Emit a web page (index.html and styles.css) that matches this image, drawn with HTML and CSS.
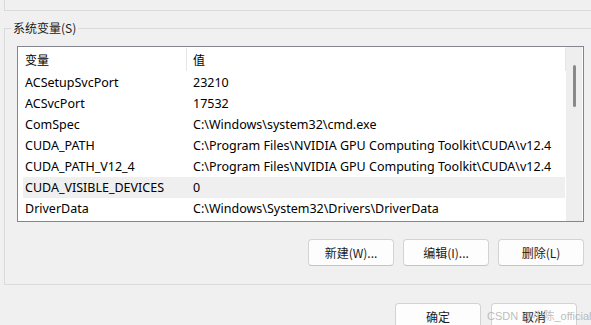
FILE: index.html
```html
<!DOCTYPE html>
<html lang="zh-CN">
<head>
  <meta charset="UTF-8" />
  <title>环境变量</title>
  <link rel="stylesheet" href="styles.css">
</head>
<body>

<!-- 用户变量分组的底边 -->
<div class="prev-group"></div>

<!-- 系统变量 -->
<fieldset class="group">
  <legend>系统变量(S)</legend>

  <div class="listbox">
    <div class="list">
      <div class="list-head">
        <div class="col-name">变量</div>
        <div class="col-value">值</div>
      </div>
      <div class="row"><div class="col-name">ACSetupSvcPort</div><div class="col-value">23210</div></div>
      <div class="row"><div class="col-name">ACSvcPort</div><div class="col-value">17532</div></div>
      <div class="row"><div class="col-name">ComSpec</div><div class="col-value">C:\Windows\system32\cmd.exe</div></div>
      <div class="row"><div class="col-name">CUDA_PATH</div><div class="col-value">C:\Program Files\NVIDIA GPU Computing Toolkit\CUDA\v12.4</div></div>
      <div class="row"><div class="col-name">CUDA_PATH_V12_4</div><div class="col-value">C:\Program Files\NVIDIA GPU Computing Toolkit\CUDA\v12.4</div></div>
      <div class="row hover"><div class="col-name">CUDA_VISIBLE_DEVICES</div><div class="col-value">0</div></div>
      <div class="row"><div class="col-name">DriverData</div><div class="col-value">C:\Windows\System32\Drivers\DriverData</div></div>
    </div>
    <div class="scrollbar"><div class="thumb"></div></div>
  </div>

  <div class="actions">
    <button class="btn">新建(W)...</button>
    <button class="btn">编辑(I)...</button>
    <button class="btn">删除(L)</button>
  </div>
</fieldset>

<div class="footer">
  <button class="btn">确定</button>
  <button class="btn">取消</button>
</div>

<div class="watermark">CSDN @小陈_official</div>

</body>
</html>
```

FILE: styles.css
```css
body {
  margin: 0;
  background: #f0f0f0;
  font-family: "Noto Sans", "Noto Sans CJK SC", sans-serif;
  font-size: 12.5px;
  color: #000;
  width: 591px;
  height: 325px;
  overflow: hidden;
  position: relative;
}

.prev-group {
  margin-left: 4px;
  height: 10px;
  border-left: 1px solid #dadada;
  border-bottom: 1px solid #dadada;
}

.group {
  margin: 9px -20px 0 4px;
  padding: 0 0 16px 12px;
  border: 1px solid #dadada;
  box-sizing: border-box;
  height: 265px;
}
.group legend {
  padding: 0 2px;
  margin-left: -6px;
  font-family: "Noto Sans CJK SC", sans-serif;
  font-size: 12px;
  line-height: 16px;
  color: #1a1a1a;
}

.listbox {
  margin-top: 10px;
  width: 567px;
  height: 176px;
  box-sizing: border-box;
  border: 1px solid #858590;
  background: #fff;
  display: flex;
}
.list { flex: 1; padding-left: 5px; }
.list-head, .row { display: flex; align-items: center; }
.list-head { height: 25px; font-family: "Noto Sans CJK SC", sans-serif; font-size: 12px; }
.list-head .col-name { border-right: 1px solid #e5e5e5; height: 23px; line-height: 23px; margin-right: 6px; width: 161px; }
.list-head .col-value { flex: 1; border-right: 1px solid #e5e5e5; height: 23px; line-height: 23px; }
.row { height: 21px; white-space: nowrap; }
.row.hover { background: #efefef; margin-right: 1px; }
.col-name { width: 168px; padding-left: 2px; }

.scrollbar {
  width: 16px;
  background: #eeeeee;
  border-right: 1px solid #fafafa;
  position: relative;
}
.thumb {
  position: absolute;
  left: 7px;
  top: 18px;
  width: 3px;
  height: 42px;
  border-radius: 2px;
  background: #8a8a8a;
}

.actions {
  display: flex;
  gap: 9px;
  width: 567px;
  justify-content: flex-end;
  margin-top: 17px;
}
.btn {
  width: 86px;
  height: 27px;
  box-sizing: border-box;
  border: 1px solid #d3d3d3;
  border-bottom-color: #c4c4c4;
  border-radius: 4px;
  background: #fdfdfd;
  font-family: "Noto Sans CJK SC", sans-serif;
  font-size: 12px;
  color: #1a1a1a;
  padding: 0;
}

.footer {
  display: flex;
  justify-content: flex-end;
  gap: 10px;
  padding-right: 14px;
  margin-top: 18px;
}

/* 截图水印 */
.watermark {
  position: absolute;
  left: 487px;
  top: 307px;
  white-space: nowrap;
  font-family: "Liberation Sans", "Noto Sans CJK SC", sans-serif;
  font-size: 11px;
  color: rgba(160, 160, 160, 0.7);
}
```
